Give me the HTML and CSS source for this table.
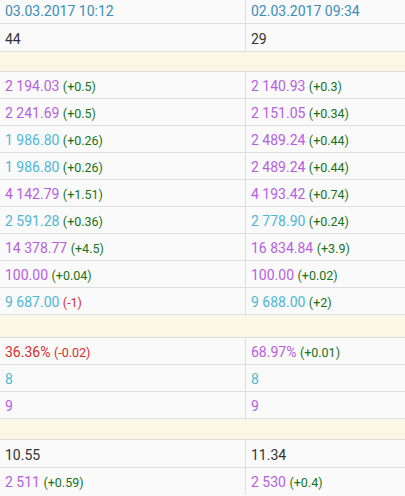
FILE: index.html
```html
<!DOCTYPE html>
<html>
	<head>
		<meta content="width=device-width, initial-scale=1" name="viewport" />
		<link rel="stylesheet" href="styles.css">
	</head>
	<body>
		<table class="stats">
			<tr class="head">
				<td class="first">03.03.2017 10:12</td>
				<td>02.03.2017 09:34</td>
			</tr>
			<tr class="plain">
				<td class="first">44</td>
				<td>29</td>
			</tr>
			<tr class="group"><td colspan="2"></td></tr>
			<tr>
				<td class="first"><span class="pu">2 194.03</span> <span class="up">(+0.5)</span></td>
				<td><span class="pu">2 140.93</span> <span class="up">(+0.3)</span></td>
			</tr>
			<tr>
				<td class="first"><span class="pu">2 241.69</span> <span class="up">(+0.5)</span></td>
				<td><span class="pu">2 151.05</span> <span class="up">(+0.34)</span></td>
			</tr>
			<tr>
				<td class="first"><span class="cy">1 986.80</span> <span class="up">(+0.26)</span></td>
				<td><span class="pu">2 489.24</span> <span class="up">(+0.44)</span></td>
			</tr>
			<tr>
				<td class="first"><span class="cy">1 986.80</span> <span class="up">(+0.26)</span></td>
				<td><span class="pu">2 489.24</span> <span class="up">(+0.44)</span></td>
			</tr>
			<tr>
				<td class="first"><span class="pu">4 142.79</span> <span class="up">(+1.51)</span></td>
				<td><span class="pu">4 193.42</span> <span class="up">(+0.74)</span></td>
			</tr>
			<tr>
				<td class="first"><span class="cy">2 591.28</span> <span class="up">(+0.36)</span></td>
				<td><span class="cy">2 778.90</span> <span class="up">(+0.24)</span></td>
			</tr>
			<tr>
				<td class="first"><span class="pu">14 378.77</span> <span class="up">(+4.5)</span></td>
				<td><span class="pu">16 834.84</span> <span class="up">(+3.9)</span></td>
			</tr>
			<tr>
				<td class="first"><span class="pu">100.00</span> <span class="up">(+0.04)</span></td>
				<td><span class="pu">100.00</span> <span class="up">(+0.02)</span></td>
			</tr>
			<tr>
				<td class="first"><span class="cy">9 687.00</span> <span class="down">(-1)</span></td>
				<td><span class="cy">9 688.00</span> <span class="up">(+2)</span></td>
			</tr>
			<tr class="group wide"><td colspan="2"></td></tr>
			<tr>
				<td class="first"><span class="rd">36.36%</span> <span class="down">(-0.02)</span></td>
				<td><span class="pu">68.97%</span> <span class="up">(+0.01)</span></td>
			</tr>
			<tr>
				<td class="first"><span class="cy">8</span></td>
				<td><span class="cy">8</span></td>
			</tr>
			<tr>
				<td class="first"><span class="pu">9</span></td>
				<td><span class="pu">9</span></td>
			</tr>
			<tr class="group mid"><td colspan="2"></td></tr>
			<tr class="plain">
				<td class="first">10.55</td>
				<td>11.34</td>
			</tr>
			<tr>
				<td class="first"><span class="pu">2 511</span> <span class="up">(+0.59)</span></td>
				<td><span class="pu">2 530</span> <span class="up">(+0.4)</span></td>
			</tr>
		</table>
	</body>
</html>
```

FILE: styles.css
```css
body {
	margin: 0;
	background-color: #fafafa;
	font-family: Roboto, "Liberation Sans", sans-serif;
}
.stats {
	width: 405px;
	border-collapse: collapse;
	table-layout: fixed;
}
.stats td {
	height: 24px;
	padding: 2px 5px 0;
	border-top: 1px solid #dedede;
	font-size: 14px;
	line-height: 16px;
	color: #333;
	vertical-align: middle;
	white-space: nowrap;
}
.stats td.first {
	width: 235px;
	border-right: 1px solid #dedede;
}
.stats .head td {
	height: 23px;
	border-top: none;
	color: #3c8dbc;
	padding-top: 0;
	vertical-align: top;
	line-height: 23px;
}
.stats .plain td {
	height: 25px;
}
.stats .group td {
	height: 19px;
	padding: 0;
	background-color: #fcf6e4;
}
.stats .group.wide td {
	height: 22px;
}
.stats .group.mid td {
	height: 20px;
}
.pu {
	color: #b65fdf;
}
.cy {
	color: #4eb7d5;
}
.rd {
	color: #d92b2b;
}
.up, .down {
	font-size: 12.5px;
}
.up {
	color: #17731a;
}
.down {
	color: #d92b2b;
}
```
